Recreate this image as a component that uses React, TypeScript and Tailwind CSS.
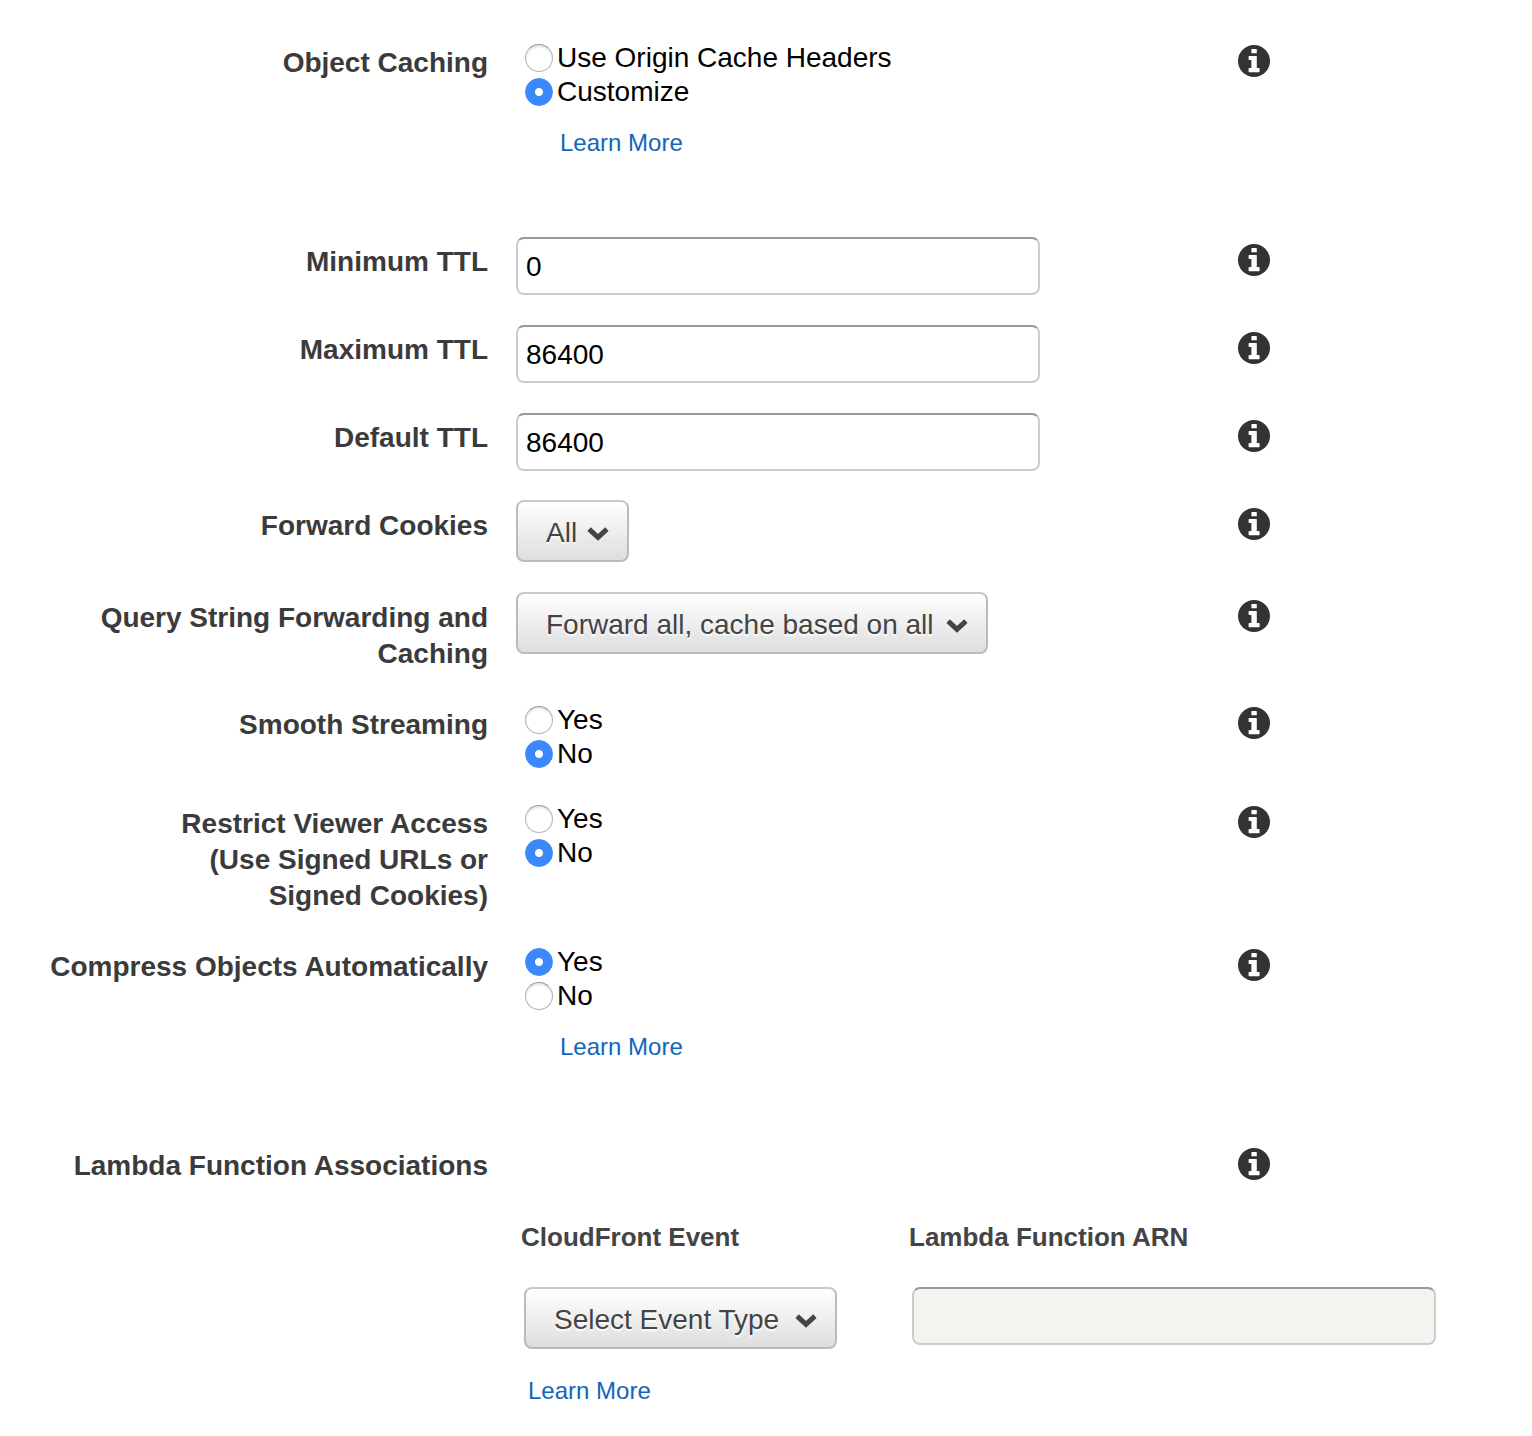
import { useState, type ReactNode } from "react";

function InfoButton({ topic }: { topic: string }) {
  return (
    <button type="button" aria-label={`About ${topic}`} className="mt-2 block size-8 cursor-pointer">
      <svg viewBox="0 0 32 32" className="size-8" aria-hidden="true">
        <circle cx="16" cy="16" r="16" fill="#333" />
        <path
          fill="#fff"
          d="M14 4h4.2q.6 0 .6.6v3.1q0 .6-.6.6H14q-.6 0-.6-.6V4.600q0-.6.6-.6ZM11.300 11h6.900q.6 0 .6.6V23h2.100q.7 0 .7.7v2.900q0 .7-.7.7h-9.600q-.7 0-.7-.7v-2.900q0-.7.7-.7h2.100v-8h-2.100q-.7 0-.7-.7v-2.600q0-.7.7-.7Z"
        />
      </svg>
    </button>
  );
}

type RowProps = { label: string; htmlFor?: string; labelId?: string; children?: ReactNode };

function Row({ label, htmlFor, labelId, children }: RowProps) {
  const labelClass = "block whitespace-pre-line pt-2 text-right font-bold leading-9 text-[#3b3b3b]";
  return (
    <div className="grid grid-cols-[488fr_694fr_294fr] gap-x-7 pb-[27px]">
      <div className="pl-10">
        {htmlFor ? (
          <label htmlFor={htmlFor} className={labelClass}>{label}</label>
        ) : (
          <div id={labelId} className={labelClass}>{label}</div>
        )}
      </div>
      <div>{children}</div>
      <InfoButton topic={label} />
    </div>
  );
}

function RadioRow({ id, label, options, initial, more }: { id: string; label: string; options: string[]; initial: string; more?: boolean }) {
  const [value, setValue] = useState(initial);
  return (
    <Row label={label} labelId={`${id}-label`}>
      <div role="radiogroup" aria-labelledby={`${id}-label`} className="pt-1 pl-[9px]">
        {options.map((option) => (
          <label key={option} className="flex h-[34px] items-center gap-1 text-black">
            <input
              type="radio"
              name={id}
              checked={value === option}
              onChange={() => setValue(option)}
              className="size-7 shrink-0 appearance-none rounded-full border border-[#b4b4b4] border-t-[#999] bg-white shadow-[inset_0_2px_2px_#e4e4e4] checked:border-[#3b88fd] checked:bg-[radial-gradient(circle,#fff_3.5px,#3b88fd_4.5px)] checked:shadow-none"
            />
            {option}
          </label>
        ))}
      </div>
      {more && (
        <div className="mt-4 mb-12 pl-11">
          <LearnMore />
        </div>
      )}
    </Row>
  );
}

function LearnMore() {
  return <a href="#learn-more" className="block w-fit text-2xl leading-9 text-[#1166bb]">Learn More</a>;
}

const fieldClass =
  "block h-[58px] w-full max-w-[524px] rounded-lg border-2 border-[#ccc] border-t-[#999] bg-white px-2 pt-[2px] text-black disabled:bg-[#f4f3ef]";

function TextRow({ id, label, value }: { id: string; label: string; value: string }) {
  return (
    <Row label={label} htmlFor={id}>
      <div className="pt-px pb-[2px]">
        <input id={id} type="text" defaultValue={value} className={fieldClass} />
      </div>
    </Row>
  );
}

function Select({ id, options, width, name }: { id: string; options: string[]; width: string; name?: string }) {
  return (
    <div className={`relative ${width}`}>
      <select
        id={id}
        aria-label={name}
        className="block h-[62px] w-full appearance-none rounded-lg border-2 border-[#bbb] border-t-[#c8c8c8] bg-linear-to-b from-white to-[#dedede] pt-1 pr-11 pl-7 text-[#444] [text-shadow:0_2px_2px_#fff]"
      >
        {options.map((option) => (
          <option key={option}>{option}</option>
        ))}
      </select>
      <svg viewBox="0 0 22 14" className="pointer-events-none absolute top-[27px] right-5 h-[14px] w-[22px]" aria-hidden="true">
        <path d="M2.100 2.100 11 10.300l8.900-8.200" fill="none" stroke="#444" strokeWidth="5" />
      </svg>
    </div>
  );
}

export default function App() {
  return (
    <form className="bg-white pt-[37px] pb-6 font-['Liberation_Sans',Arial,sans-serif] text-[28px]">
      <RadioRow id="object-caching" label="Object Caching" options={["Use Origin Cache Headers", "Customize"]} initial="Customize" more />
      <TextRow id="min-ttl" label="Minimum TTL" value="0" />
      <TextRow id="max-ttl" label="Maximum TTL" value="86400" />
      <TextRow id="default-ttl" label="Default TTL" value="86400" />
      <Row label="Forward Cookies" htmlFor="cookies">
        <div className="pb-[3px]">
          <Select id="cookies" options={["All", "None", "Whitelist"]} width="w-[113px]" />
        </div>
      </Row>
      <Row label="Query String Forwarding and Caching" htmlFor="query">
        <Select id="query" options={["Forward all, cache based on all"]} width="w-[472px]" />
      </Row>
      <RadioRow id="smooth" label="Smooth Streaming" options={["Yes", "No"]} initial="No" />
      <RadioRow id="restrict" label={"Restrict Viewer Access\n(Use Signed URLs or\nSigned Cookies)"} options={["Yes", "No"]} initial="No" />
      <RadioRow id="compress" label="Compress Objects Automatically" options={["Yes", "No"]} initial="Yes" more />
      <Row label="Lambda Function Associations" labelId="lambda-label" />
      <div className="grid grid-cols-[488fr_1016fr] gap-x-7">
        <div />
        <div>
          <table aria-labelledby="lambda-label" className="text-left">
            <thead>
              <tr className="text-[26px] leading-9 text-[#444]">
                <th className="w-[388px] px-[5px] pt-2 pb-8">CloudFront Event</th>
                <th className="px-[5px] pt-2 pb-8">Lambda Function ARN</th>
              </tr>
            </thead>
            <tbody>
              <tr className="align-top">
                <td className="pl-2">
                  <Select id="event" name="CloudFront Event" options={["Select Event Type"]} width="w-[313px]" />
                </td>
                <td className="pl-2">
                  <div className="w-[524px]">
                    <input type="text" disabled aria-label="Lambda Function ARN" className={fieldClass} />
                  </div>
                </td>
              </tr>
            </tbody>
          </table>
          <div className="mt-6 pl-3">
            <LearnMore />
          </div>
        </div>
      </div>
    </form>
  );
}
